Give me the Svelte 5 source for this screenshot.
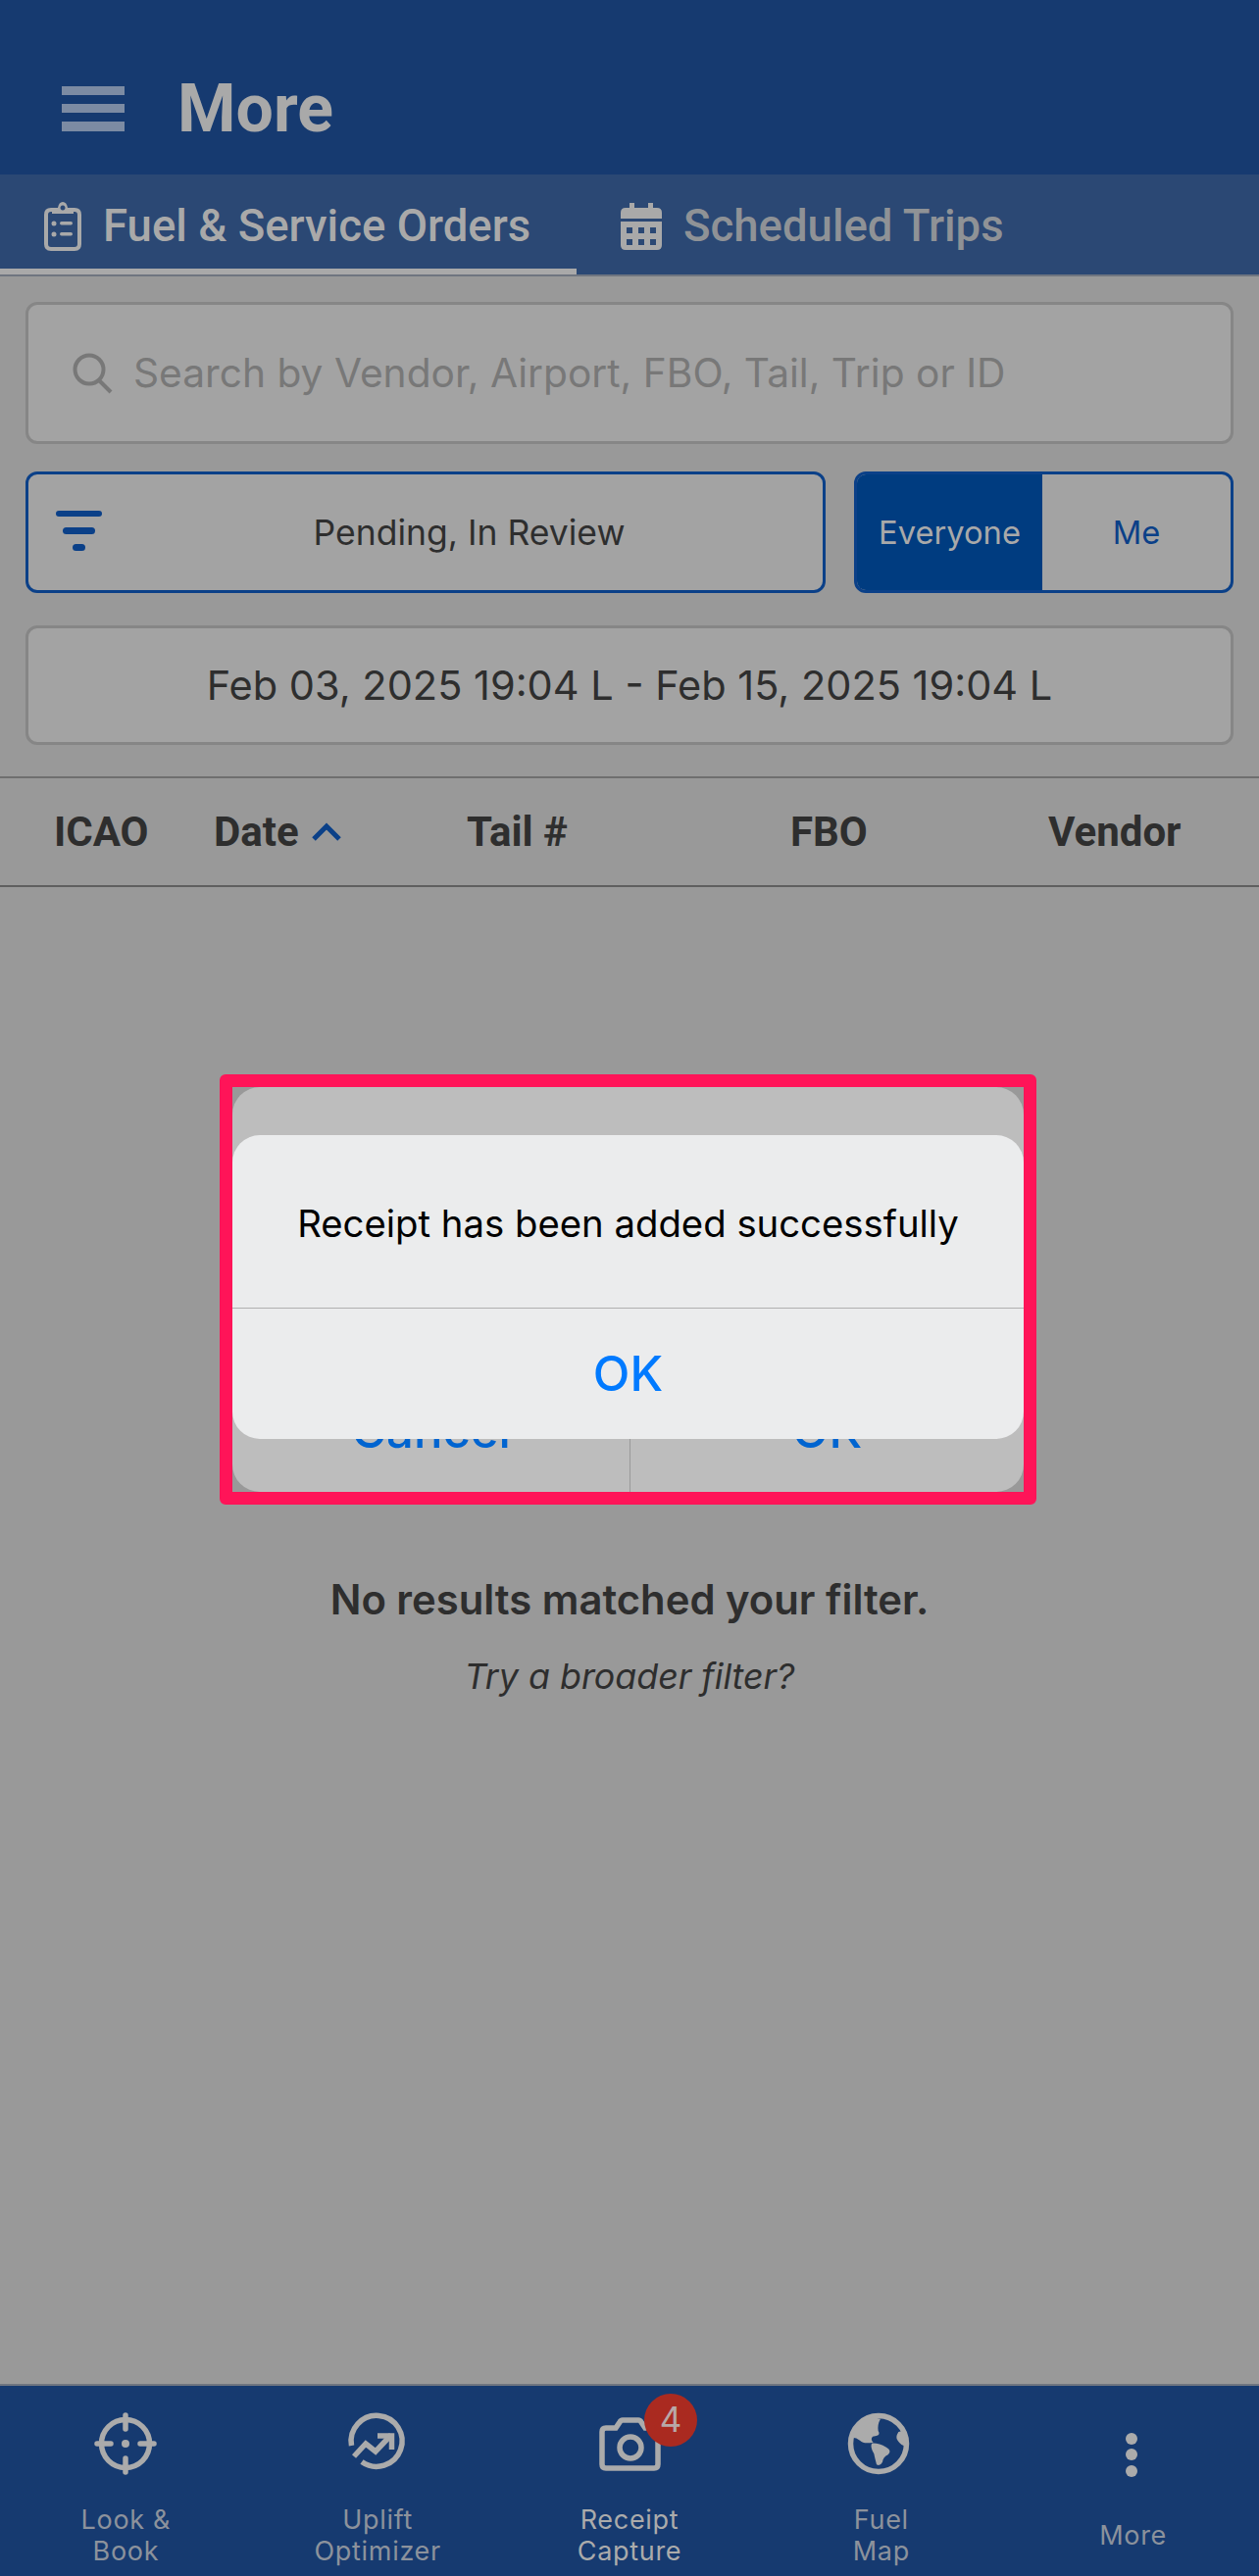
<script>
  const columns = [
    { label: "ICAO" },
    { label: "Date", sorted: true },
    { label: "Tail #" },
    { label: "FBO" },
    { label: "Vendor" },
  ];
</script>

<div class="page">
  <header class="topbar">
    <svg class="menu" width="64" height="46" viewBox="0 0 64 46" aria-hidden="true">
      <rect x="0" y="0" width="64" height="9" />
      <rect x="0" y="18" width="64" height="9" />
      <rect x="0" y="36" width="64" height="10" />
    </svg>
    <h1>More</h1>
  </header>

  <nav class="tabs">
    <div class="tab active">
      <svg width="38" height="50" viewBox="0 0 38 50" aria-hidden="true">
        <path class="line" d="M10 8H7q-5 0-5 5v30q0 5 5 5h24q5 0 5-5V13q0-5-5-5h-3" />
        <path class="solid" fill-rule="evenodd" d="M8 6h6q1-6 5-6t5 6h6v6H8zM19 3.500a2.500 2.500 0 1 0 .01 0z" />
        <circle class="solid" cx="10" cy="22" r="2.500" />
        <circle class="solid" cx="10" cy="33" r="2.500" />
        <rect class="solid" x="16" y="20" width="13" height="3.500" rx="1.700" />
        <rect class="solid" x="16" y="31" width="13" height="3.500" rx="1.700" />
      </svg>
      <span>Fuel &amp; Service Orders</span>
    </div>
    <div class="tab">
      <svg width="42" height="48" viewBox="0 0 42 48" aria-hidden="true">
        <path class="solid" fill-rule="evenodd" d="M9 0h5v5h14V0h5v5h4q5 0 5 5v6H0v-6q0-5 5-5h4zM0 19h42v24q0 5-5 5H5q-5 0-5-5zM6 25v6h6v-6zM18 25v6h6v-6zM30 25v6h6v-6zM6 37v6h6v-6zM18 37v6h6v-6zM30 37v6h6v-6z" />
      </svg>
      <span>Scheduled Trips</span>
    </div>
  </nav>

  <main class="content">
    <section class="filters">
      <div class="search">
        <svg width="42" height="42" viewBox="0 0 42 42" aria-hidden="true">
          <circle cx="17" cy="17" r="14.500" />
          <path d="M27 28l12 12" />
        </svg>
        <span>Search by Vendor, Airport, FBO, Tail, Trip or ID</span>
      </div>

      <div class="filter-row">
        <div class="status">
          <svg width="48" height="42" viewBox="0 0 48 42" aria-hidden="true">
            <rect x="0" y="0" width="47" height="6" rx="3" />
            <rect x="7" y="17" width="33" height="7" rx="3.500" />
            <rect x="17" y="34" width="13" height="7" rx="3.500" />
          </svg>
          <span>Pending, In Review</span>
        </div>
        <div class="toggle">
          <span class="on">Everyone</span>
          <span>Me</span>
        </div>
      </div>

      <div class="dates">Feb 03, 2025 19:04 L - Feb 15, 2025 19:04 L</div>
    </section>

    <div class="thead">
      {#each columns as col}
        <div class="th">
          {col.label}
          {#if col.sorted}
            <svg width="32" height="20" viewBox="0 0 32 20" aria-hidden="true">
              <path d="M3 17L16 4l13 13" />
            </svg>
          {/if}
        </div>
      {/each}
    </div>

    <div class="empty">
      <p class="title">No results matched your filter.</p>
      <p class="hint">Try a broader filter?</p>
    </div>
  </main>

  <footer class="bottom">
    <div class="item">
      <svg width="90" height="90" viewBox="0 0 90 90" aria-hidden="true">
        <circle class="ring" cx="45" cy="38" r="24.500" />
        <path class="ring round" d="M45 9v14M45 53v14M16 38h14M60 38h14" />
        <circle class="fill" cx="45" cy="38" r="4" />
      </svg>
      <div class="label">Look &amp;<br />Book</div>
    </div>
    <div class="item">
      <svg width="90" height="90" viewBox="0 0 90 90" aria-hidden="true">
        <path class="ring" d="M18.500 40A26 26 0 1 1 29 56.500" />
        <path class="ring" d="M21 51l12-13 10 8 16-17" />
        <path class="ring" d="M45 30h14.500v14" />
      </svg>
      <div class="label">Uplift<br />Optimizer</div>
    </div>
    <div class="item current">
      <div class="icon-wrap">
        <svg width="90" height="90" viewBox="0 0 90 90" aria-hidden="true">
          <path class="ring" d="M21 22h10l4-6q1-2 3-2h16q2 0 3 2l4 6h9q4 0 4 4v33q0 4-4 4H21q-4 0-4-4V26q0-4 4-4z" />
          <circle class="ring" cx="46" cy="42" r="11" />
        </svg>
        <span class="badge">4</span>
      </div>
      <div class="label">Receipt<br />Capture</div>
    </div>
    <div class="item">
      <svg width="90" height="90" viewBox="0 0 90 90" aria-hidden="true">
        <circle class="ring" cx="42" cy="38" r="28.500" />
        <g class="fill" transform="scale(0.3333)">
          <path d="M55 60Q85 28 132 38Q122 55 125 75Q136 90 108 92Q100 100 110 110Q80 116 70 105Q58 95 46 95Z" />
          <path d="M105 113Q125 111 150 125Q168 135 155 148Q140 155 138 170Q130 185 120 178Q115 160 112 145Q100 125 105 113Z" />
          <path d="M187 78Q176 95 185 105Q195 120 210 122Q216 100 202 74Z" />
        </g>
      </svg>
      <div class="label">Fuel<br />Map</div>
    </div>
    <div class="item">
      <svg width="90" height="90" viewBox="0 0 90 90" aria-hidden="true">
        <circle class="fill" cx="43" cy="33" r="6" />
        <circle class="fill" cx="43" cy="49" r="6" />
        <circle class="fill" cx="43" cy="66" r="6" />
      </svg>
      <div class="label">More</div>
    </div>
  </footer>

  <!-- annotated alert, sits over the page -->
  <div class="callout">
    <div class="back-alert">
      <div class="back-actions">
        <span>Cancel</span>
        <span>OK</span>
      </div>
    </div>
    <div class="alert">
      <p>Receipt has been added successfully</p>
      <div class="alert-ok">OK</div>
    </div>
  </div>
</div>

<style>
  :global(body) {
    margin: 0;
    background: #999999;
  }

  .page {
    position: relative;
    display: flex;
    flex-direction: column;
    height: 2628px;
    overflow: hidden;
    background: #999999;
    font-family: Inter, "Liberation Sans", sans-serif;
    color: #2e2e2e;
  }

  .topbar {
    display: flex;
    align-items: center;
    flex: none;
    height: 178px;
    padding: 44px 0 0 63px;
    box-sizing: border-box;
    gap: 54px;
    background: #163a70;
  }

  .menu rect {
    fill: #7c8ba3;
  }

  h1 {
    margin: 0;
    font: 700 68px Roboto, sans-serif;
    color: #a9a9a9;
  }

  .tabs {
    display: flex;
    flex: none;
    height: 104px;
    box-sizing: border-box;
    background: #2b4874;
    border-bottom: 2px solid #6f7580;
    font-family: Roboto, sans-serif;
    font-size: 45.5px;
    font-weight: 500;
    color: #8f9296;
  }

  .tab {
    display: flex;
    align-items: center;
    gap: 22px;
    padding: 3px 0 0 45px;
  }

  .tab.active {
    width: 588px;
    box-sizing: border-box;
    color: #a9a9a9;
    box-shadow: inset 0 -6px 0 #a9a9a9;
  }

  .tabs .line {
    fill: none;
    stroke: #a9a9a9;
    stroke-width: 4;
  }

  .tabs .solid {
    fill: #a9a9a9;
  }

  .content {
    flex: 1;
  }

  .filters {
    display: flex;
    flex-direction: column;
    padding: 26px 26px 0;
  }

  .search {
    display: flex;
    align-items: center;
    gap: 20px;
    height: 145px;
    box-sizing: border-box;
    padding-left: 45px;
    background: #a3a3a3;
    border: 3px solid #868686;
    border-radius: 12px;
    font-size: 40.700px;
    color: #787878;
  }

  .search svg {
    fill: none;
    stroke: #787878;
    stroke-width: 4;
  }

  .filter-row {
    display: flex;
    gap: 29px;
    height: 124px;
    margin-top: 28px;
  }

  .status {
    position: relative;
    display: flex;
    align-items: center;
    justify-content: center;
    width: 816px;
    box-sizing: border-box;
    padding-left: 89px;
    background: #a3a3a3;
    border: 3px solid #0b4088;
    border-radius: 12px;
    font-size: 35.500px;
  }

  .status svg {
    position: absolute;
    left: 28px;
    top: 37px;
    fill: #0b4088;
  }

  .toggle {
    display: flex;
    flex: 1;
    overflow: hidden;
    background: #a3a3a3;
    border: 3px solid #0b4088;
    border-radius: 12px;
    font-size: 32.700px;
    color: #0b4088;
  }

  .toggle span {
    display: flex;
    align-items: center;
    justify-content: center;
    flex: 1;
  }

  .toggle .on {
    flex: none;
    width: 189px;
    background: #003c80;
    color: #a9a9a9;
  }

  .dates {
    display: flex;
    align-items: center;
    justify-content: center;
    height: 122px;
    box-sizing: border-box;
    margin-top: 33px;
    background: #a3a3a3;
    border: 3px solid #868686;
    border-radius: 12px;
    font-size: 41.500px;
  }

  .thead {
    display: grid;
    grid-template-columns: 163px 258px 330px 263px auto;
    align-items: center;
    height: 113px;
    box-sizing: border-box;
    margin-top: 32px;
    padding: 0 0 0 55px;
    border-top: 2px solid #6f6f6f;
    border-bottom: 2px solid #5f5f5f;
    font: 700 42px Roboto, sans-serif;
  }

  .th {
    display: flex;
    align-items: center;
    gap: 12px;
  }

  .th svg {
    fill: none;
    stroke: #0b4088;
    stroke-width: 5;
  }

  .empty {
    padding-top: 703px;
    text-align: center;
  }

  .empty p {
    margin: 0;
  }

  .title {
    font: 600 41.800px/48px Inter, sans-serif;
  }

  .hint {
    margin-top: 34px !important;
    font: italic 400 35.800px/40px Inter, sans-serif;
  }

  .bottom {
    display: grid;
    grid-template-columns: repeat(5, 1fr);
    flex: none;
    height: 196px;
    box-sizing: border-box;
    padding-top: 21px;
    background: #163a70;
    border-top: 2px solid #6f7580;
  }

  .item {
    display: flex;
    flex-direction: column;
    align-items: center;
  }

  .item svg {
    display: block;
  }

  .icon-wrap {
    position: relative;
  }

  .ring {
    fill: none;
    stroke: #ababab;
    stroke-width: 5.500;
  }

  .round {
    stroke-linecap: round;
  }

  .fill {
    fill: #ababab;
  }

  .label {
    display: flex;
    flex-direction: column;
    justify-content: center;
    height: 64px;
    margin-top: 10px;
    font-size: 27px;
    line-height: 32px;
    letter-spacing: 0.7px;
    text-align: center;
    color: #8c929c;
  }

  .current .label {
    color: #ababab;
  }

  .badge {
    position: absolute;
    left: 60px;
    top: -13px;
    width: 54px;
    height: 54px;
    border-radius: 50%;
    background: #aa2a20;
    color: #b8a8a8;
    font-size: 35px;
    line-height: 52px;
    text-align: center;
  }

  .callout {
    position: absolute;
    left: 224px;
    top: 1096px;
    width: 833px;
    height: 439px;
    box-sizing: border-box;
    border: 13px solid #ff1458;
    border-radius: 6px;
    background: #999999;
    overflow: hidden;
  }

  .back-alert {
    position: absolute;
    inset: 0;
    display: flex;
    align-items: flex-end;
    background: #bdbdbd;
    border-radius: 28px;
  }

  .back-actions {
    display: flex;
    width: 100%;
    height: 126px;
    font-size: 49px;
    font-weight: 500;
    color: #0064d0;
  }

  .back-actions span {
    display: flex;
    align-items: center;
    justify-content: center;
    flex: 1;
  }

  .back-actions span:first-child {
    flex: none;
    width: 405px;
  }

  .back-actions span + span {
    border-left: 1px solid #999999;
  }

  .alert {
    position: absolute;
    left: 0;
    right: 0;
    top: 49px;
    display: flex;
    flex-direction: column;
    height: 310px;
    background: #ebeced;
    border-radius: 28px;
    overflow: hidden;
  }

  .alert p {
    display: flex;
    align-items: center;
    justify-content: center;
    flex: none;
    height: 177px;
    box-sizing: border-box;
    padding-top: 4px;
    margin: 0;
    font-size: 38.300px;
    color: #000;
    border-bottom: 1px solid #b0b0b0;
  }

  .alert-ok {
    display: flex;
    align-items: center;
    justify-content: center;
    flex: 1;
    font-size: 49px;
    font-weight: 500;
    color: #007aff;
  }
</style>
